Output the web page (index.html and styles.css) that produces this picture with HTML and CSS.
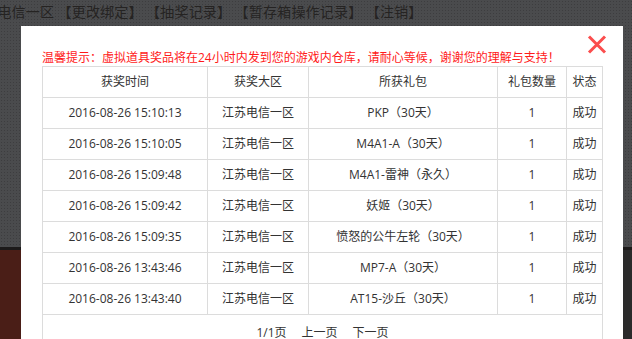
FILE: index.html
```html
<!DOCTYPE html>
<html lang="zh-CN">
<head>
<meta charset="utf-8">
<title>抽奖记录</title>
<link rel="stylesheet" href="styles.css">
</head>
<body>
<div class="page">
  <div class="top">
    <div class="topbar">江苏电信一区 【更改绑定】 【抽奖记录】 【暂存箱操作记录】 【注销】</div>
  </div>
  <div class="bottom">
    <div class="bottom-left"></div>
    <div class="bottom-right"></div>
  </div>

  <div class="modal">
    <button class="close" aria-label="关闭">
      <svg width="20" height="19" viewBox="0 0 20 19"><path d="M2 1.5 L18 17.5 M18 1.5 L2 17.5" stroke="#fb4d4d" stroke-width="3" fill="none"/></svg>
    </button>
    <p class="tip">温馨提示：虚拟道具奖品将在24小时内发到您的游戏内仓库，请耐心等候，谢谢您的理解与支持！</p>
    <table class="records">
      <colgroup>
        <col class="c1"><col class="c2"><col class="c3"><col class="c4"><col class="c5">
      </colgroup>
      <thead>
        <tr><th>获奖时间</th><th>获奖大区</th><th>所获礼包</th><th>礼包数量</th><th>状态</th></tr>
      </thead>
      <tbody>
        <tr><td>2016-08-26 15:10:13</td><td>江苏电信一区</td><td>PKP（30天）</td><td>1</td><td>成功</td></tr>
        <tr><td>2016-08-26 15:10:05</td><td>江苏电信一区</td><td>M4A1-A（30天）</td><td>1</td><td>成功</td></tr>
        <tr><td>2016-08-26 15:09:48</td><td>江苏电信一区</td><td>M4A1-雷神（永久）</td><td>1</td><td>成功</td></tr>
        <tr><td>2016-08-26 15:09:42</td><td>江苏电信一区</td><td>妖姬（30天）</td><td>1</td><td>成功</td></tr>
        <tr><td>2016-08-26 15:09:35</td><td>江苏电信一区</td><td>愤怒的公牛左轮（30天）</td><td>1</td><td>成功</td></tr>
        <tr><td>2016-08-26 13:43:46</td><td>江苏电信一区</td><td>MP7-A（30天）</td><td>1</td><td>成功</td></tr>
        <tr><td>2016-08-26 13:43:40</td><td>江苏电信一区</td><td>AT15-沙丘（30天）</td><td>1</td><td>成功</td></tr>
      </tbody>
      <tfoot>
        <tr><td colspan="5" class="pager"><span>1/1页</span><a>上一页</a><a>下一页</a></td></tr>
      </tfoot>
    </table>
  </div>
</div>
</body>
</html>
```
FILE: styles.css
```css
* { box-sizing: border-box; }
html, body {
  margin: 0;
  padding: 0;
  width: 632px;
  height: 339px;
  overflow: hidden;
}
body {
  font-family: "Open Sans", "Noto Sans CJK SC", sans-serif;
  background: #4a4b4d;
}
.page {
  position: relative;
  width: 632px;
  height: 339px;
  display: flex;
  flex-direction: column;
  overflow: hidden;
}
.top {
  height: 250px;
  background-color: #4a4b4d;
  background-image: radial-gradient(circle, rgba(0,0,0,0.18) 0.6px, transparent 0.9px);
  background-size: 3px 3px;
  border-bottom: 3px solid #1c1a1a;
}
.topbar {
  margin-left: -31px;
  padding-top: 1px;
  font-family: "Noto Sans CJK SC", sans-serif;
  font-size: 14px;
  line-height: 20px;
  color: #252322;
  white-space: nowrap;
  letter-spacing: 0.2px;
}
.bottom {
  flex: 1;
  display: flex;
}
.bottom-left {
  flex: 1;
  background: #4a1e17;
}
.bottom-right {
  width: 9px;
  background: #2b2b2b;
}
.modal {
  position: absolute;
  left: 21px;
  top: 26px;
  bottom: 0;
  width: 602px;
  background: #fff;
  padding: 24px 21px 0 21px;
}
.close {
  position: absolute;
  left: 566px;
  top: 9px;
  width: 20px;
  height: 19px;
  padding: 0;
  border: 0;
  background: none;
  display: block;
}
.close svg { display: block; }
.tip {
  margin: 0;
  font-size: 12px;
  line-height: 16px;
  color: #ff1a1a;
  white-space: nowrap;
}
.records {
  border-collapse: collapse;
  table-layout: fixed;
  width: 560px;
  font-size: 12px;
  color: #333;
}
.c1 { width: 165px; }
.c2 { width: 101px; }
.c3 { width: 189px; }
.c4 { width: 69px; }
.c5 { width: 36px; }
.records th,
.records td {
  border: 1px solid #dcdcdc;
  height: 31px;
  padding: 0;
  text-align: center;
  font-weight: normal;
  line-height: 30px;
  white-space: nowrap;
}
.records .pager {
  border-bottom: 0;
  height: 24px;
  padding-top: 10px;
  line-height: 15px;
  vertical-align: top;
}
.pager span,
.pager a {
  color: #333;
  text-decoration: none;
}
.pager a { margin-left: 15px; }
```
